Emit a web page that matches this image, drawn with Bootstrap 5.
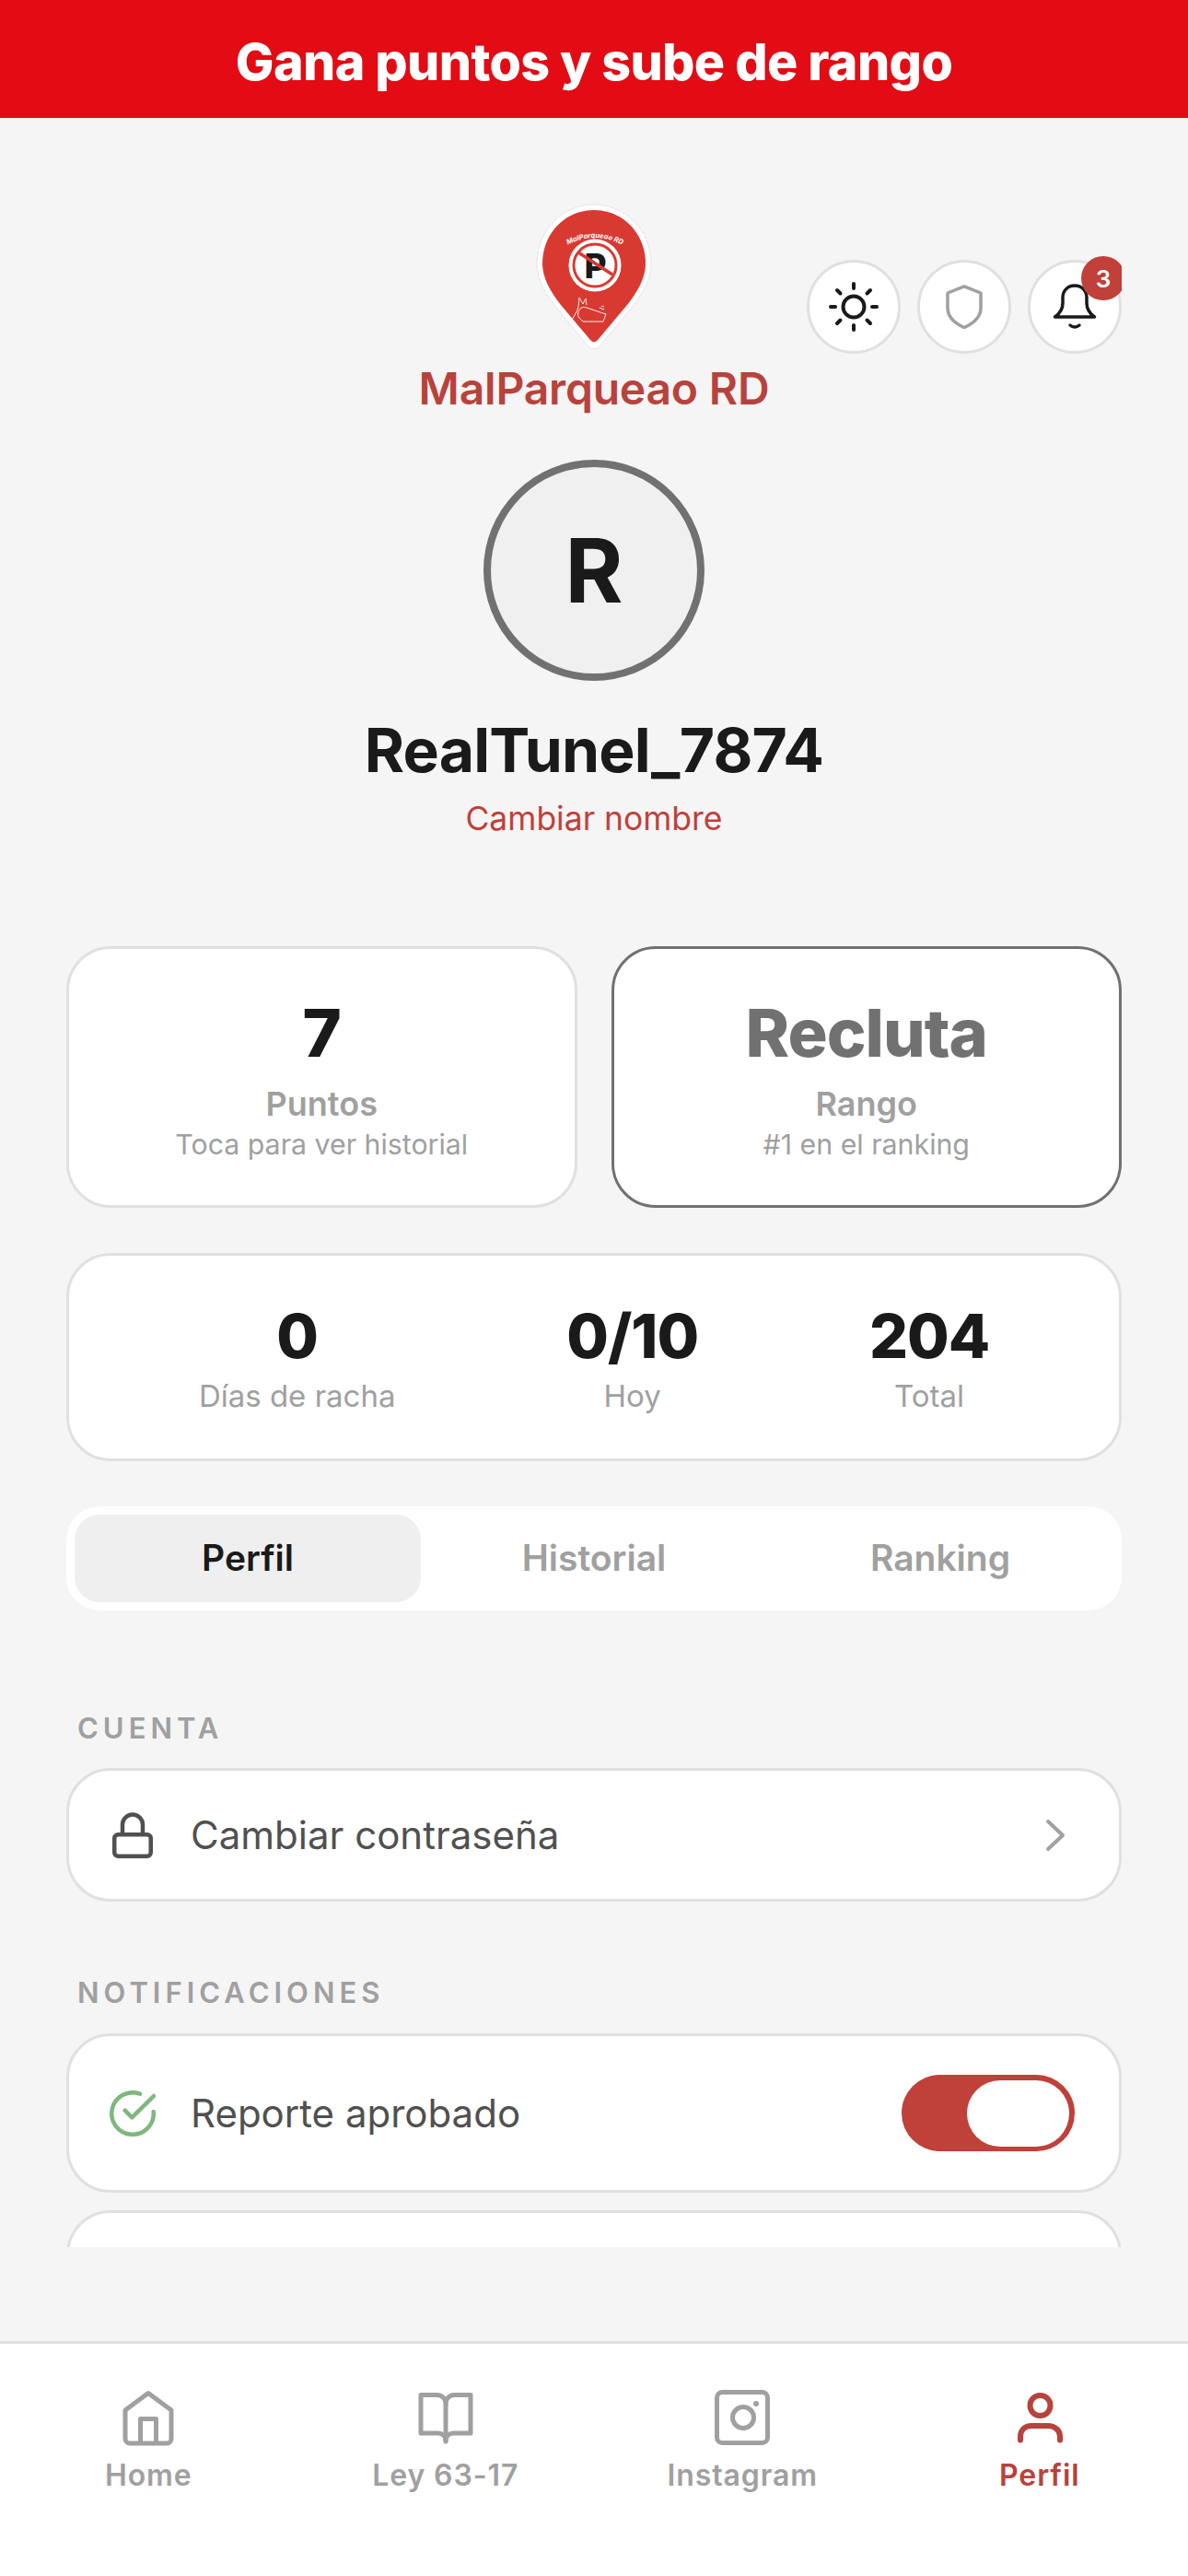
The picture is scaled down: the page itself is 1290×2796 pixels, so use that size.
<!doctype html>
<html lang="es">
<head>
<meta charset="utf-8">
<title>MalParqueao RD</title>
<link href="https://cdn.jsdelivr.net/npm/bootstrap@5.3.0/dist/css/bootstrap.min.css" rel="stylesheet">
<style>
html,body{height:2796px;overflow:hidden}
body{background:#f5f5f5;font-family:Inter,"Liberation Sans",sans-serif;color:#1a1a1a}
.app-shell{height:2796px}
.promo{height:128px;background:#e30b14;color:#fff;font-family:Inter,"Liberation Sans",sans-serif;font-weight:800;font-size:55.5px;line-height:1;letter-spacing:-.6px;padding-top:5px}
.scroll-area{height:2413px;padding:92px 72px 0}
.clip-area{height:2219px;overflow:hidden}
.head-grid{display:grid;grid-template-columns:1fr auto 1fr;height:227px}
.logo-pin{width:128px;height:160px;display:block;margin:0 auto}
.brand{font-size:48px;font-weight:600;color:#b8423c;line-height:58px;margin-top:13px;letter-spacing:-.2px;white-space:nowrap}
.round-btn{width:102px;height:102px;border:3.5px solid #e0e0e0;border-radius:50%;background:#fff;padding:0}
.head-btns{gap:18px;padding-top:62px}
.alert-dot{width:48px;height:48px;top:-7px;right:-7px;background:#c0403a;color:#fff;font-size:26px;font-weight:600}
.avatar{width:240px;height:240px;border:8px solid #717171;background:#f0f0f0;font-size:96px;font-weight:700;margin-top:52px;line-height:1}
.user-name{font-size:66px;font-weight:700;line-height:78px;margin-top:36px;letter-spacing:-.8px}
.rename{font-size:35.5px;line-height:44px;color:#c0403a;margin-top:14px}
.stat-grid{display:grid;grid-template-columns:1fr 1fr;gap:37px;margin-top:116px}
.panel{background:#fff;border:3px solid #e0e0e0;border-radius:48px}
.stat-box{height:284px;padding-top:47px}
.rank-box{border-color:#717171}
.big{font-size:72px;font-weight:800;line-height:88px;letter-spacing:-1px}
.rank-word{color:#717171}
.stat-label{font-size:36px;font-weight:600;color:#a0a0a0;line-height:44px;margin-top:11px}
.stat-hint{font-size:30.3px;color:#a0a0a0;line-height:36px;margin-top:4px}
.streak{height:226px;margin-top:49px;padding:47px 48px 0}
.streak-num{font-size:66px;font-weight:800;line-height:80px;letter-spacing:-1px}
.streak-cap{font-size:33px;color:#a0a0a0;line-height:40px;margin-top:5px}
.tab-bar{height:113px;margin-top:49px;background:#fff;border-radius:36px;padding:9px}
.tab-item{font-size:39px;font-weight:600;color:#a0a0a0;border-radius:27px}
.tab-on{background:#efefef;color:#1a1a1a}
.sec-label{font-size:31px;font-weight:600;letter-spacing:5px;color:#a0a0a0;line-height:36px;padding-left:12px}
.row-box{font-size:42px;color:#505050}
.sect-one{margin-top:110px}
.sect-two{margin-top:81px}
.rowh1{height:145px;margin-top:25px;padding:0 57px 0 44px}
.rowh2{height:173px;margin-top:26px;padding:0 48px 0 44px}
.rowh3{height:100px;margin-top:19px}
.row-ico{width:50px;height:50px;margin-right:38px;flex:none}
.sw-track{width:188px;height:83px;border-radius:42px;background:#c0403a;padding:5.5px 6px}
.sw-knob{width:111px;height:72px;border-radius:36px;background:#fff}
.tabs-foot{height:255px;background:#fff;border-top:3px solid #e0e0e0;padding-top:50px}
.foot-item{width:25%;color:#a0a0a0;font-size:32px;font-weight:600;line-height:38px;letter-spacing:.9px}
.foot-item svg{width:64px;height:64px;margin-bottom:10px}
.foot-on{color:#b8423c}
</style>
</head>
<body>
<div class="app-shell d-flex flex-column">
  <div class="promo d-flex align-items-center justify-content-center">Gana puntos y sube de rango</div>

  <main class="scroll-area">
    <div class="clip-area">
      <div class="head-grid">
        <div></div>
        <div class="text-center">
          <svg class="logo-pin" viewBox="0 0 128 160" aria-label="logo">
            <path d="M64 2C30 2 2 30 2 66c0 18 10 34 22 49l33 40c4 5 10 5 14 0l33-40c12-15 22-31 22-49C126 30 98 2 64 2z" fill="#fff" stroke="#e6e6e6" stroke-width="1"/>
            <path d="M64 8C33 8 8 33 8 66c0 16 9 31 20 45l32 38c3 3 5 3 8 0l32-38c11-14 20-29 20-45C120 33 95 8 64 8z" fill="#d83a32"/>
            <path id="logoArc" d="M33 47Q65 29 97 47" fill="none"/>
            <text font-family="Inter,sans-serif" font-size="7.500" font-weight="700" font-style="italic" fill="#fff"><textPath href="#logoArc" startOffset="50%" text-anchor="middle">MalParqueao RD</textPath></text>
            <circle cx="65" cy="68" r="28.500" fill="#fff"/>
            <circle cx="65" cy="68" r="23" fill="#fff" stroke="#d83a32" stroke-width="3"/>
            <text x="65.500" y="82" text-anchor="middle" font-family="Inter,sans-serif" font-size="37" font-weight="800" fill="#1a1a1a">P</text>
            <path d="M47 54L84 78" stroke="#d83a32" stroke-width="3.500"/>
            <path d="M40 127c3-5 6-9 7-14l1-10 4 7 3-6 1 7M48 125l4 4 22 0 3-8-21-7c-5-2-8 1-9 5-1 3 0 5 1 6M70 114l5 2M72 112l3 1" fill="none" stroke="#fff" stroke-width=".9"/>
          </svg>
          <div class="brand">MalParqueao RD</div>
        </div>
        <div class="d-flex justify-content-end align-items-start head-btns">
          <button class="round-btn d-flex align-items-center justify-content-center" aria-label="tema">
            <svg width="58" height="58" viewBox="0 0 58 58" fill="none" stroke="#1a1a1a" stroke-width="4" stroke-linecap="round"><circle cx="29" cy="29" r="11.500"/><path d="M29 4v5M29 49v5M4 29h5M49 29h5M11 11l3.500 3.500M43.500 43.500L47 47M11 47l3.500-3.500M43.500 14.500L47 11"/></svg>
          </button>
          <button class="round-btn d-flex align-items-center justify-content-center" aria-label="seguridad">
            <svg width="40" height="48" viewBox="0 0 40 48" fill="none" stroke="#a0a0a0" stroke-width="3.500" stroke-linejoin="round"><path d="M20 1.800L38 9v16c0 10-8 17-18 21.500C10 42 2 35 2 25V9z"/></svg>
          </button>
          <button class="round-btn d-flex align-items-center justify-content-center position-relative" aria-label="avisos">
            <svg width="48" height="50" viewBox="0 0 48 50" fill="none" stroke="#1a1a1a" stroke-width="3.500" stroke-linecap="round" stroke-linejoin="round"><path d="M24 2c-8 0-13 6-13 13v6c0 6-3 11-8.500 15h43c-5.500-4-8.500-9-8.500-15v-6C37 8 32 2 24 2z"/><path d="M19 45c3 2.500 7 2.500 10 0"/></svg>
            <span class="alert-dot position-absolute rounded-circle d-flex align-items-center justify-content-center">3</span>
          </button>
        </div>
      </div>

      <div class="d-flex flex-column align-items-center">
        <div class="avatar rounded-circle d-flex align-items-center justify-content-center">R</div>
        <div class="user-name">RealTunel_7874</div>
        <div class="rename">Cambiar nombre</div>
      </div>

      <div class="stat-grid">
        <div class="panel stat-box text-center">
          <div class="big">7</div>
          <div class="stat-label">Puntos</div>
          <div class="stat-hint">Toca para ver historial</div>
        </div>
        <div class="panel stat-box rank-box text-center">
          <div class="big rank-word">Recluta</div>
          <div class="stat-label">Rango</div>
          <div class="stat-hint">#1 en el ranking</div>
        </div>
      </div>

      <div class="panel streak d-flex justify-content-around text-center">
        <div><div class="streak-num">0</div><div class="streak-cap">Días de racha</div></div>
        <div><div class="streak-num">0/10</div><div class="streak-cap">Hoy</div></div>
        <div><div class="streak-num">204</div><div class="streak-cap">Total</div></div>
      </div>

      <div class="tab-bar d-flex">
        <div class="tab-item tab-on flex-fill w-100 d-flex align-items-center justify-content-center">Perfil</div>
        <div class="tab-item flex-fill w-100 d-flex align-items-center justify-content-center">Historial</div>
        <div class="tab-item flex-fill w-100 d-flex align-items-center justify-content-center">Ranking</div>
      </div>

      <div class="sec-label sect-one">CUENTA</div>
      <div class="panel row-box rowh1 d-flex align-items-center">
        <svg class="row-ico" viewBox="0 0 50 50" fill="none" stroke="#505050" stroke-width="4.500" stroke-linejoin="round"><rect x="5.250" y="24.250" width="39.500" height="23.500" rx="4"/><path d="M14 24v-10.500a11 11 0 0 1 22 0V24"/></svg>
        <span>Cambiar contraseña</span>
        <svg class="ms-auto" width="24" height="36" viewBox="0 0 24 36" fill="none" stroke="#a0a0a0" stroke-width="4" stroke-linecap="round" stroke-linejoin="round"><path d="M4 3l16 15L4 33"/></svg>
      </div>

      <div class="sec-label sect-two">NOTIFICACIONES</div>
      <div class="panel row-box rowh2 d-flex align-items-center">
        <svg class="row-ico" viewBox="0 0 50 50" fill="none" stroke="#7fb77e" stroke-width="4.500" stroke-linecap="round" stroke-linejoin="round"><path d="M47.700 23A22.750 22.750 0 1 1 33 3.700"/><path d="M16.700 21.700L24.300 29.300L48 6"/></svg>
        <span>Reporte aprobado</span>
        <div class="sw-track ms-auto d-flex justify-content-end"><div class="sw-knob"></div></div>
      </div>
      <div class="panel rowh3"></div>
    </div>
  </main>

  <nav class="tabs-foot d-flex">
    <div class="foot-item d-flex flex-column align-items-center">
      <svg viewBox="0 0 64 64" fill="none" stroke="#a0a0a0" stroke-width="5" stroke-linejoin="round"><path d="M7 22L32 3.500L57 22V53a5 5 0 0 1-5 5H12a5 5 0 0 1-5-5z"/><path d="M23.500 58V31.500h17V58"/></svg>
      <span>Home</span>
    </div>
    <div class="foot-item d-flex flex-column align-items-center">
      <svg viewBox="0 0 64 64" fill="none" stroke="#a0a0a0" stroke-width="5" stroke-linejoin="round"><path d="M5 5.500H22c6 0 10 4 10 10 0-6 4-10 10-10h17V47H40c-4 0-8 3-8 9 0-6-4-9-8-9H5z"/><path d="M32 15.500V56"/></svg>
      <span>Ley 63-17</span>
    </div>
    <div class="foot-item d-flex flex-column align-items-center">
      <svg viewBox="0 0 64 64" fill="none" stroke="#a0a0a0" stroke-width="5"><rect x="4.500" y="2.500" width="55" height="55" rx="6"/><circle cx="33" cy="30" r="11.500"/><circle cx="47" cy="15" r="3" fill="#a0a0a0" stroke="none"/></svg>
      <span>Instagram</span>
    </div>
    <div class="foot-item foot-on d-flex flex-column align-items-center">
      <svg viewBox="0 0 64 64" fill="none" stroke="#b8423c" stroke-width="6" stroke-linecap="round"><circle cx="32.500" cy="17" r="11"/><path d="M11 54.500v-4c0-7 5-11.500 12-11.500h18c7 0 13 4.500 13 11.500v4"/></svg>
      <span>Perfil</span>
    </div>
  </nav>
</div>
<script src="https://cdn.jsdelivr.net/npm/bootstrap@5.3.0/dist/js/bootstrap.bundle.min.js"></script>
</body>
</html>
